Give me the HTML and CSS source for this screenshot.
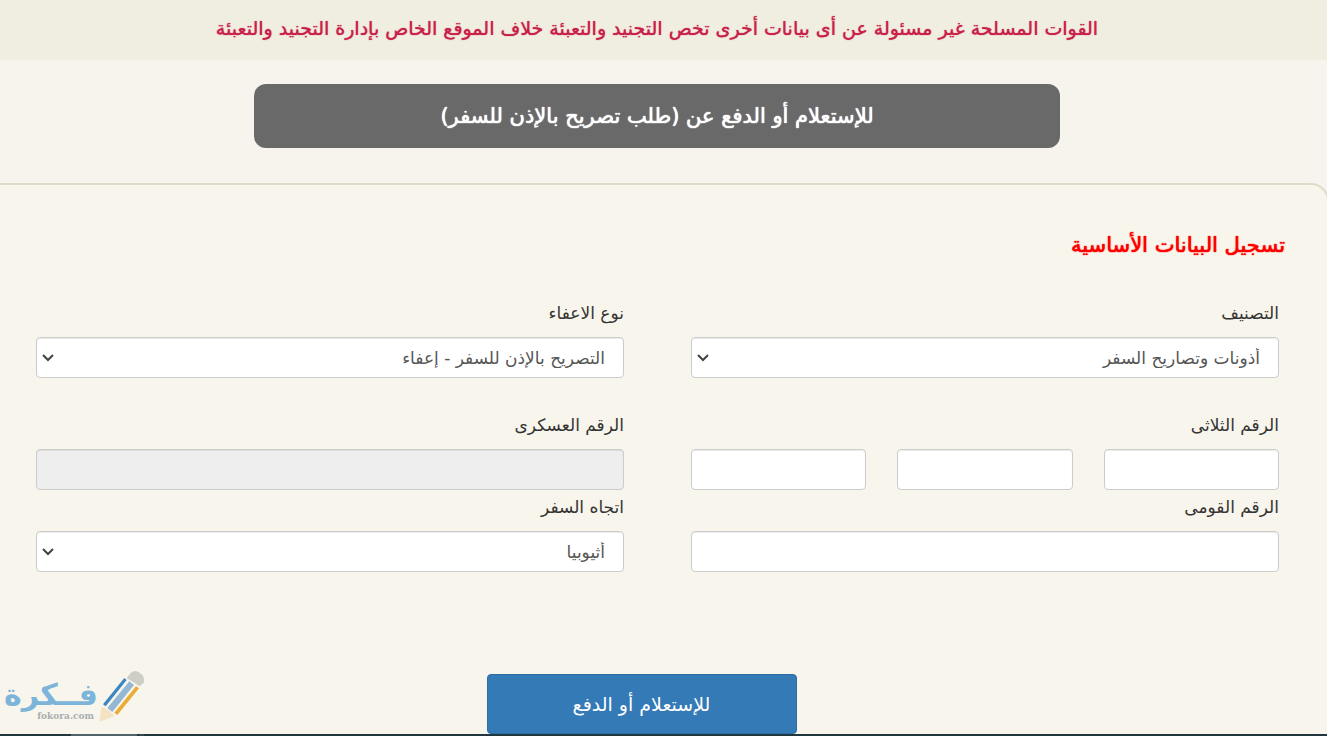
FILE: index.html
```html
<!DOCTYPE html>
<html lang="ar" dir="rtl">
<head>
    <meta charset="UTF-8">
    <title>طلب تصريح بالإذن للسفر</title>
    <link rel="stylesheet" href="styles.css">
</head>
<body>
<div class="page">
    <div class="notice">القوات المسلحة غير مسئولة عن أى بيانات أخرى تخص التجنيد والتعبئة خلاف الموقع الخاص بإدارة التجنيد والتعبئة</div>
    <h1 class="page_title">للإستعلام أو الدفع عن (طلب تصريح بالإذن للسفر)</h1>

    <form class="panel">
        <h2 class="panel_title">تسجيل البيانات الأساسية</h2>
        <div class="fields">
            <div class="field field_spaced">
                <label for="category">التصنيف</label>
                <select class="control" id="category">
                    <option>أذونات وتصاريح السفر</option>
                </select>
            </div>
            <div class="field field_spaced">
                <label for="exemption">نوع الاعفاء</label>
                <select class="control" id="exemption">
                    <option>التصريح بالإذن للسفر - إعفاء</option>
                </select>
            </div>
            <div class="field">
                <label for="triple1">الرقم الثلاثى</label>
                <div class="triple">
                    <input class="control" type="text" id="triple1">
                    <input class="control" type="text" id="triple2" aria-label="الرقم الثلاثى">
                    <input class="control" type="text" id="triple3" aria-label="الرقم الثلاثى">
                </div>
            </div>
            <div class="field">
                <label for="military">الرقم العسكرى</label>
                <input class="control" type="text" id="military" disabled>
            </div>
            <div class="field">
                <label for="national">الرقم القومى</label>
                <input class="control" type="text" id="national">
            </div>
            <div class="field">
                <label for="direction">اتجاه السفر</label>
                <select class="control" id="direction">
                    <option>أثيوبيا</option>
                </select>
            </div>
        </div>
        <div class="actions">
            <button class="submit" type="submit">للإستعلام أو الدفع</button>
        </div>
    </form>
    <div class="footer"></div>
</div>

<svg class="watermark" viewBox="0 0 480 240" role="img" aria-label="فكرة fokora.com">
    <text class="wm_name" x="153" y="148" text-anchor="middle">فــكرة</text>
    <text class="wm_site" x="197" y="188" text-anchor="middle">fokora.com</text>
    <path d="M380 66L392 51Q404 40 419 50Q437 62 431 80L419 91Z" fill="#cfcec4"/>
    <path d="M373 66L380 72L317 151L309 145Z" fill="#3a87c0"/>
    <path d="M388 76L402 87L337 168L322 156Z" fill="#94b8d3"/>
    <path d="M408 91L417 97L352 177L343 170Z" fill="#e9ad35"/>
    <path d="M298 198L304 154Q313 153 318 160Q331 164 332 171Q341 173 343 180Z" fill="#f4e3c2"/>
    <path d="M213 234H411V240H213Z" fill="#53636c"/>
    <path d="M417 234H432V240H417Z" fill="#34474f"/>
</svg>
</body>
</html>
```
FILE: styles.css
```css
* {
    box-sizing: border-box;
}
body {
    margin: 0;
    overflow-x: hidden;
    background-color: #f7f4ed;
    color: #333;
    font-family: "DejaVu Sans", sans-serif;
    font-size: 17px;
    line-height: 24px;
}
.page {
    margin: 0 -2px 0 -15px;
}
.notice {
    padding: 16px 24px 20px;
    background-color: #f0eee1;
    color: #c9204a;
    font-size: 19px;
    text-align: center;
    text-shadow: 0 0 1px currentColor;
}
.page_title {
    width: 806px;
    max-width: 90%;
    margin: 24px auto 35px;
    padding: 16px 24px;
    border-radius: 12px;
    background-color: #696969;
    color: #fff;
    font-size: 21px;
    font-weight: normal;
    line-height: 32px;
    text-align: center;
    text-shadow: 0 0 1px currentColor, 0 0 1px currentColor;
}
.panel {
    padding: 44px 48px 0 51px;
    border: solid #dfdccb;
    border-width: 2px 2px 0 0;
    border-radius: 0 18px 0 0;
    background-color: #f8f5ec;
}
.panel_title {
    margin: 0 -6px 40px;
    color: #f00;
    font-size: 21px;
    font-weight: normal;
    line-height: 32px;
    text-shadow: 0 0 1px currentColor, 0 0 1px currentColor;
}
.fields {
    display: grid;
    grid-template-columns: 1fr 1fr;
    column-gap: 67px;
}
.field {
    margin-bottom: 5px;
}
.field_spaced {
    margin-bottom: 35px;
}
.field label {
    display: block;
    margin-bottom: 12px;
}
.triple {
    display: flex;
    gap: 31px;
}
.control {
    display: block;
    width: 100%;
    min-width: 0;
    height: 41px;
    padding: 0 18px;
    border: 1px solid #ccc;
    border-radius: 4px;
    background-color: #fff;
    box-shadow: inset 0 1px 1px rgba(0, 0, 0, .08);
    color: #555;
    font-family: inherit;
    font-size: 17px;
}
.control:disabled {
    background-color: #eee;
}
select.control {
    appearance: none;
    background-image: url("data:image/svg+xml,%3Csvg xmlns='http://www.w3.org/2000/svg' width='12' height='8'%3E%3Cpath d='M1 1l5 5 5-5' fill='none' stroke='%23444' stroke-width='2'/%3E%3C/svg%3E");
    background-repeat: no-repeat;
    background-position: 5px 16px;
}
.actions {
    display: flex;
    justify-content: center;
    padding: 97px 32px 0 0;
}
.submit {
    width: 310px;
    height: 60px;
    border: 1px solid #2e6da4;
    border-radius: 4px;
    background-color: #337ab7;
    color: #fff;
    font-family: inherit;
    font-size: 19px;
}
.footer {
    height: 2px;
    background-color: #213740;
}
.watermark {
    position: absolute;
    left: 0;
    top: 656px;
    width: 160px;
    height: 80px;
}
.wm_name {
    fill: #7db5da;
    font-size: 90px;
    font-weight: bold;
}
.wm_site {
    fill: #a9adae;
    font-family: "DejaVu Serif", serif;
    font-size: 27px;
    font-weight: bold;
    direction: ltr;
}
```
